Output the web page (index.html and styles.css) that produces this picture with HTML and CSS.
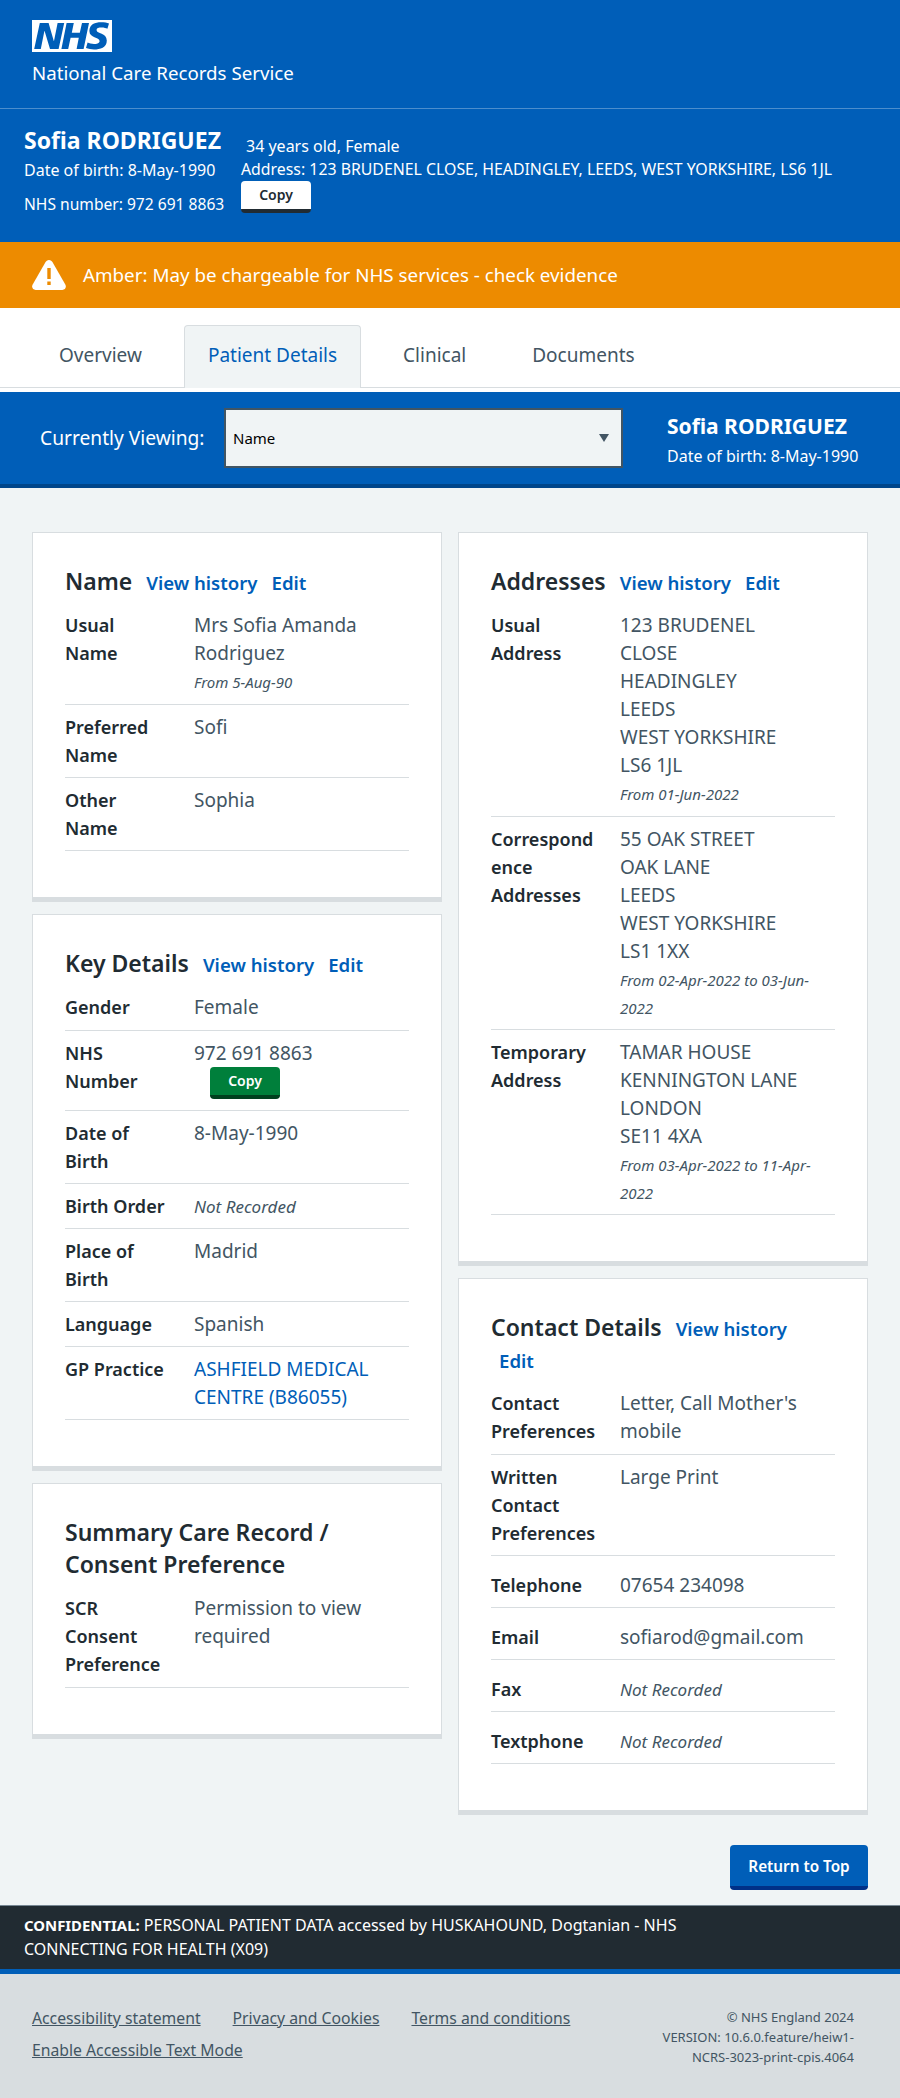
FILE: index.html
```html
<!DOCTYPE html>
<html lang="en">
<head>
<meta charset="utf-8">
<title>National Care Records Service</title>
<link rel="stylesheet" href="styles.css">
</head>
<body>
<header class="site-header">
  <svg class="logo" viewBox="0 0 40 16" role="img" aria-label="NHS"><path fill="#fff" d="M0 0h40v16H0z"/><path fill="#005eb8" d="M3.9 1.5h4.4l2.6 9h.1l1.8-9h3.3l-2.8 13H9l-2.7-9h-.1l-1.8 9H1.1M17.3 1.5h3.6l-1 4.9h4L25 1.5h3.5l-2.7 13h-3.5l1.1-5.6h-4.1l-1.2 5.6h-3.4M37.7 4.4c-.7-.3-1.6-.6-2.9-.6-1.4 0-2.5.2-2.5 1.3 0 1.8 5.1 1.2 5.1 5.1 0 3.6-3.3 4.5-6.4 4.5-1.3 0-2.9-.3-4-.7l.8-2.7c.7.4 2.1.7 3.2.7s2.8-.2 2.8-1.5c0-2.1-5.1-1.3-5.1-5 0-3.4 2.9-4.4 5.8-4.4 1.6 0 3.1.2 4 .6"/></svg>
  <div class="service-name">National Care Records Service</div>
</header>
<section class="banner">
  <div class="banner-left">
    <div class="banner-name">Sofia RODRIGUEZ</div>
    <div class="banner-dob">Date of birth: 8-May-1990</div>
    <div class="banner-nhs">NHS number: 972 691 8863</div>
  </div>
  <div class="banner-right">
    <div class="banner-age">34 years old, Female</div>
    <div class="banner-address">Address: 123 BRUDENEL CLOSE, HEADINGLEY, LEEDS, WEST YORKSHIRE, LS6 1JL</div>
    <button class="btn btn-white">Copy</button>
  </div>
</section>
<section class="alert">
  <svg class="alert-icon" viewBox="0 0 34 30" aria-hidden="true"><path fill="#fff" d="M17 0c1.600 0 2.900 1 3.700 2.400l12.600 22.200c1.400 2.500 0 5.400-3 5.400H3.700c-3 0-4.400-2.900-3-5.400L13.300 2.400C14.100 1 15.400 0 17 0z"/><rect x="15.300" y="8" width="3.400" height="11" fill="#ed8b00"/><rect x="15.300" y="21.500" width="3.400" height="3.500" fill="#ed8b00"/></svg>
  <span>Amber: May be chargeable for NHS services - check evidence</span>
</section>
<nav class="tabs">
  <a class="tab">Overview</a>
  <a class="tab tab-active">Patient Details</a>
  <a class="tab">Clinical</a>
  <a class="tab">Documents</a>
</nav>
<section class="viewing">
  <label class="viewing-label" for="view">Currently Viewing:</label>
  <div class="select-wrap">
    <select class="select" id="view"><option>Name</option></select>
  </div>
  <div class="viewing-patient">
    <div class="viewing-name">Sofia RODRIGUEZ</div>
    <div class="viewing-dob">Date of birth: 8-May-1990</div>
  </div>
</section>
<main class="main">
  <div class="columns">
    <div class="column">
      <article class="card">
        <h2 class="card-title">Name <a class="link">View history</a> <a class="link">Edit</a></h2>
        <dl class="rows">
          <div class="row"><dt>Usual Name</dt><dd>Mrs Sofia Amanda Rodriguez<small>From 5-Aug-90</small></dd></div>
          <div class="row"><dt>Preferred Name</dt><dd>Sofi</dd></div>
          <div class="row"><dt>Other Name</dt><dd>Sophia</dd></div>
        </dl>
      </article>
      <article class="card">
        <h2 class="card-title">Key Details <a class="link">View history</a> <a class="link">Edit</a></h2>
        <dl class="rows">
          <div class="row"><dt>Gender</dt><dd>Female</dd></div>
          <div class="row"><dt>NHS Number</dt><dd>972 691 8863<button class="btn btn-green">Copy</button></dd></div>
          <div class="row"><dt>Date of Birth</dt><dd>8-May-1990</dd></div>
          <div class="row"><dt>Birth Order</dt><dd><em>Not Recorded</em></dd></div>
          <div class="row"><dt>Place of Birth</dt><dd>Madrid</dd></div>
          <div class="row"><dt>Language</dt><dd>Spanish</dd></div>
          <div class="row"><dt>GP Practice</dt><dd><a class="plain-link">ASHFIELD MEDICAL CENTRE (B86055)</a></dd></div>
        </dl>
      </article>
      <article class="card">
        <h2 class="card-title">Summary Care Record / Consent Preference</h2>
        <dl class="rows">
          <div class="row"><dt>SCR Consent Preference</dt><dd>Permission to view required</dd></div>
        </dl>
      </article>
    </div>
    <div class="column">
      <article class="card">
        <h2 class="card-title">Addresses <a class="link">View history</a> <a class="link">Edit</a></h2>
        <dl class="rows">
          <div class="row"><dt>Usual Address</dt><dd>123 BRUDENEL<br>CLOSE<br>HEADINGLEY<br>LEEDS<br>WEST YORKSHIRE<br>LS6 1JL<small>From 01-Jun-2022</small></dd></div>
          <div class="row"><dt>Correspondence Addresses</dt><dd>55 OAK STREET<br>OAK LANE<br>LEEDS<br>WEST YORKSHIRE<br>LS1 1XX<small>From 02-Apr-2022 to 03-Jun-2022</small></dd></div>
          <div class="row"><dt>Temporary Address</dt><dd>TAMAR HOUSE<br>KENNINGTON LANE<br>LONDON<br>SE11 4XA<small>From 03-Apr-2022 to 11-Apr-2022</small></dd></div>
        </dl>
      </article>
      <article class="card">
        <h2 class="card-title">Contact Details <a class="link">View history</a><br><a class="link">Edit</a></h2>
        <dl class="rows">
          <div class="row"><dt>Contact Preferences</dt><dd>Letter, Call Mother's mobile</dd></div>
          <div class="row"><dt>Written Contact Preferences</dt><dd>Large Print</dd></div>
          <div class="row row-tall"><dt>Telephone</dt><dd>07654 234098</dd></div>
          <div class="row row-tall"><dt>Email</dt><dd>sofiarod@gmail.com</dd></div>
          <div class="row row-tall"><dt>Fax</dt><dd><em>Not Recorded</em></dd></div>
          <div class="row row-tall"><dt>Textphone</dt><dd><em>Not Recorded</em></dd></div>
        </dl>
      </article>
    </div>
  </div>
  <div class="return"><button class="btn btn-blue">Return to Top</button></div>
</main>
<section class="confidential"><p><strong>CONFIDENTIAL:</strong> PERSONAL PATIENT DATA accessed by HUSKAHOUND, Dogtanian - NHS CONNECTING FOR HEALTH (X09)</p></section>
<footer class="footer">
  <div class="footer-links">
    <a>Accessibility statement</a>
    <a>Privacy and Cookies</a>
    <a>Terms and conditions</a>
    <a>Enable Accessible Text Mode</a>
  </div>
  <div class="footer-meta">© NHS England 2024<br>VERSION: 10.6.0.feature/heiw1-NCRS-3023-print-cpis.4064</div>
</footer>
</body>
</html>
```
FILE: styles.css
```css
* { box-sizing: border-box; }
html, body { margin: 0; padding: 0; }
body { font-family: "Noto Sans", "Open Sans", sans-serif; color: #212b32; background: #f0f4f5; font-size: 19px; line-height: 28px; }

.site-header { background: #005eb8; height: 109px; padding: 20px 32px 0; border-bottom: 1px solid #4c8ecd; color: #fff; }
.logo { display: block; width: 80px; height: 32px; }
.service-name { margin-top: 8px; font-size: 18.7px; line-height: 26px; }

.banner { background: #005eb8; color: #fff; height: 133px; padding: 13px 24px 0; display: flex; font-size: 16px; line-height: 24px; }
.banner-left { width: 217px; flex: none; }
.banner-name { font-size: 23px; font-weight: 700; line-height: 36px; }
.banner-nhs { margin-top: 10px; font-size: 15.6px; }
.banner-right { display: flex; flex-direction: column; align-items: flex-start; }
.banner-age { margin: 12px 0 0 5px; }
.banner-address { margin-top: -1px; font-size: 15.85px; white-space: nowrap; }

.btn { display: block; border: 0; border-radius: 4px; font-family: inherit; font-weight: 600; cursor: pointer; padding: 0; }
.btn-white { width: 70px; height: 32px; background: #fff; color: #212b32; border-bottom: 4px solid #212b32; font-size: 14px; line-height: 28px; }
.btn-green { width: 70px; height: 32px; margin: 0 0 3px 16px; background: #007f3b; color: #fff; border-bottom: 4px solid #00401e; font-size: 14px; line-height: 28px; }
.btn-blue { width: 138px; height: 45px; background: #005eb8; color: #fff; border-bottom: 4px solid #003087; font-size: 15.3px; }

.alert { background: #ed8b00; color: #fff; height: 66px; padding: 0 32px; display: flex; align-items: center; gap: 17px; font-size: 18.8px; }
.alert-icon { width: 34px; height: 30px; flex: none; }

.tabs { background: #fff; height: 84px; padding: 17px 0 0 35px; display: flex; gap: 18px; align-items: flex-start; position: relative; }
.tabs::after { content: ""; position: absolute; left: 0; right: 0; top: 79px; height: 1px; background: #d8dde0; }
.tab { height: 63px; padding: 0 24px; line-height: 60px; color: #425563; font-size: 19px; }
.tab-active { position: relative; z-index: 1; background: #f0f4f5; border: 1px solid #d8dde0; border-bottom: 0; border-radius: 4px 4px 0 0; padding: 0 23px; color: #005eb8; line-height: 58px; }

.viewing { background: #005eb8; border-bottom: 4px solid #00468b; height: 96px; display: flex; align-items: flex-start; padding: 16px 0 0 40px; color: #fff; }
.viewing-label { width: 184px; flex: none; margin-top: 16px; font-size: 19.2px; }
.select-wrap { width: 399px; flex: none; position: relative; }
.select-wrap::after { content: ""; position: absolute; right: 14px; top: 26px; border-left: 5px solid transparent; border-right: 5px solid transparent; border-top: 8px solid #425563; }
.select { display: block; width: 100%; height: 60px; padding: 0 7px; appearance: none; -webkit-appearance: none; border: 2px solid #425563; border-radius: 0; background: #f0f4f5; color: #000; font-family: inherit; font-size: 15px; }
.viewing-patient { margin-left: 44px; }
.viewing-name { margin-top: 2px; font-size: 21px; font-weight: 700; line-height: 32px; }
.viewing-dob { margin-top: 2px; font-size: 16px; line-height: 24px; white-space: nowrap; }

.main { padding: 44px 32px 15px; }
.columns { display: flex; gap: 16px; align-items: flex-start; }
.column { width: 410px; flex: none; }
.card { background: #fff; border: 1px solid #d8dde0; box-shadow: 0 4px 0 #d8dde0; padding: 32px; margin-bottom: 16px; }
.card-title { margin: 0 0 14px; font-size: 23px; line-height: 32px; font-weight: 600; }
.link { margin-left: 8px; font-size: 18.6px; line-height: 1; font-weight: 600; color: #005eb8; }
.rows { margin: 0 0 14px; }
.row { display: grid; grid-template-columns: 106px 1fr; column-gap: 23px; padding: 8px 0; border-bottom: 1px solid #d8dde0; }
.row:first-child { padding-top: 0; padding-bottom: 9px; }
.row-tall { padding-top: 15px; }
dt { font-weight: 600; overflow-wrap: anywhere; font-size: 18px; }
dd { margin: 0; color: #425563; font-size: 19px; }
dd small { display: block; margin: 1px 0 -1px; font-size: 15px; font-style: italic; }
dd em { font-size: 17px; line-height: 1; }
.plain-link { color: #005eb8; }

.return { display: flex; justify-content: flex-end; padding-top: 18px; }

.confidential { background: #212b32; color: #fff; height: 69px; border-top: 1px solid #768692; border-bottom: 5px solid #005eb8; padding: 7px 24px 0; font-size: 16px; line-height: 24px; }
.confidential p { margin: 0; max-width: 680px; }
.confidential strong { font-size: 14.9px; }

.footer { background: #d8dde0; color: #425563; height: 124px; padding: 28px 32px 0; display: flex; justify-content: space-between; font-size: 15.75px; line-height: 32px; }
.footer-links { width: 560px; display: flex; flex-wrap: wrap; column-gap: 32px; align-content: flex-start; }
.footer-links a { text-decoration: underline; }
.footer-meta { width: 196px; margin: 5px 14px 0 0; font-size: 13px; line-height: 20px; text-align: right; }
```
